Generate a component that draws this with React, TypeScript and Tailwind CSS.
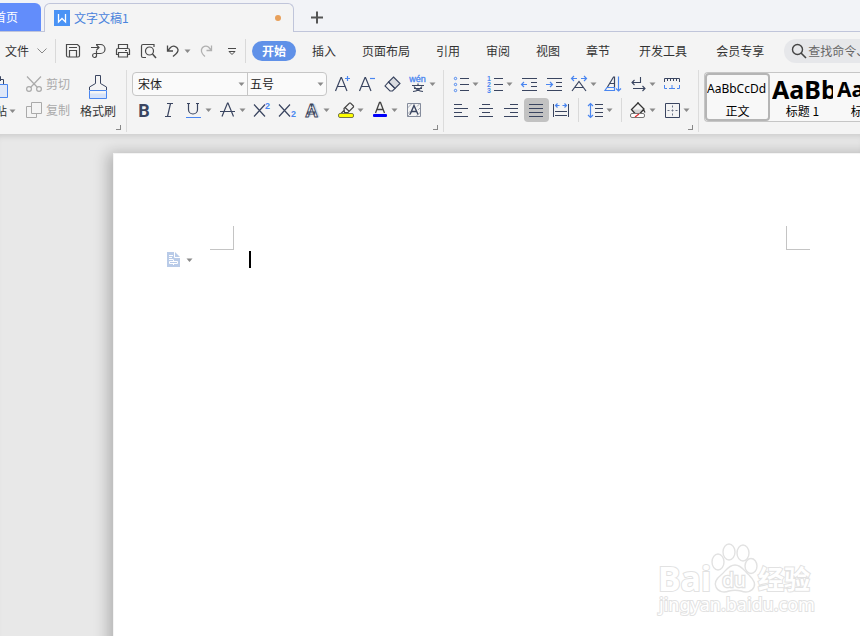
import type { ReactNode } from 'react'
import clsx from 'clsx'

const INK = '#3a4560'
const BLUE = '#4a86f0'
const GREY = '#4a4a4a'

function Icon({ children, color = INK }: { children: ReactNode; color?: string }) {
  return (
    <svg width="22" height="22" viewBox="0 0 22 22" fill="none" stroke={color} className="shrink-0" aria-hidden="true">
      {children}
    </svg>
  )
}

function Caret() {
  return (
    <svg width="7" height="4" viewBox="0 0 7 4" className="shrink-0" aria-hidden="true">
      <path d="M0.500 0.500h6L3.500 4z" fill="#8a8a8a" />
    </svg>
  )
}

interface ToolProps {
  label: string
  menu?: boolean
  active?: boolean
  children: ReactNode
}

function Tool({ label, menu, active, children }: ToolProps) {
  return (
    <button
      aria-label={label}
      title={label}
      className={clsx(
        'flex h-6 shrink-0 items-center rounded pl-px',
        menu ? 'w-[34px]' : 'w-[25px]',
        active ? 'bg-[#c2c2c2]' : 'hover:bg-[#e2e4ea]',
      )}
    >
      {children}
      {menu && <Caret />}
    </button>
  )
}

function Separator() {
  return <div className="mx-1 h-6 w-px shrink-0 bg-[#d9d9d9]" />
}

/* One ribbon section with its dialog launcher in the corner */
function Group({ children, className }: { children: ReactNode; className?: string }) {
  return (
    <section className={clsx('relative flex h-[62px] shrink-0 border-r border-[#dcdcdc] pt-0.5', className)}>
      {children}
      <button aria-label="更多设置" className="absolute right-[5px] bottom-0.5 size-[5px] border-r border-b border-[#888]" />
    </section>
  )
}

function TabBar() {
  return (
    <header className="flex h-8 items-end border-b border-[#c0c5da] bg-[#f2f3f7]">
      <a href="#home" className="flex h-7 w-[41px] shrink-0 items-center justify-end overflow-hidden rounded-tr-md bg-[#628dfb] pr-[23px] whitespace-nowrap text-white">
        首页
      </a>
      <div className="-mb-px ml-[3px] flex h-[29px] w-[250px] shrink-0 items-center rounded-t-md border border-b-0 border-[#c0c5da] bg-[#f4f4f4] pr-3 pl-[9px]">
        <svg width="16" height="16" viewBox="0 0 16 16" fill="none" className="shrink-0" aria-hidden="true">
          <rect width="16" height="16" fill="#4a93f5" />
          <path d="M4.500 4v8L8 8.500l3.500 3.500V4" stroke="#fff" strokeWidth="1.300" />
        </svg>
        <a href="#doc" className="ml-1 text-[#4a83dc]">文字文稿1</a>
        <span className="ml-auto size-1.5 rounded-full bg-[#e8a05a]" />
      </div>
      <button aria-label="新建" className="mb-[7px] ml-4">
        <svg width="13" height="13" viewBox="0 0 13 13" stroke="#555" strokeWidth="2" aria-hidden="true">
          <path d="M7 0.500v12M1 6.500h12" />
        </svg>
      </button>
    </header>
  )
}

const MENUS = ['插入', '页面布局', '引用', '审阅', '视图', '章节']
const EXTRA_MENUS = ['开发工具', '会员专享']

function MenuBar() {
  return (
    <div className="flex h-[38px] items-center pl-[5px] whitespace-nowrap text-[#333]">
      <button className="flex shrink-0 items-center gap-2">
        文件
        <svg width="10" height="6" viewBox="0 0 10 6" fill="none" stroke="#888" aria-hidden="true">
          <path d="M0.500 0.500L5 5l4.500-4.500" />
        </svg>
      </button>
      <div className="mr-[5px] ml-2 h-6 w-px shrink-0 bg-[#d9d9d9]" />
      <Tool label="保存">
        <Icon color={GREY}>
          <path d="M4.500 4.500h11l2 2v9a1.500 1.500 0 0 1-1.500 1.500H6a1.500 1.500 0 0 1-1.500-1.500z" strokeWidth="1.200" />
          <path d="M7 7.500h8M7.500 17v-6.500h7V17" strokeWidth="1.200" />
        </Icon>
      </Tool>
      <Tool label="输出为PDF">
        <Icon color={GREY}>
          <path d="M9 4.500h4.500a4.500 4.500 0 0 1 0 9H9M4 7.500h8M9.500 5l2.500 2.500L9.500 10M9.500 10.500v5.500a2 2 0 1 1-2-2.500h2" strokeWidth="1.200" />
        </Icon>
      </Tool>
      <Tool label="打印">
        <Icon color={GREY}>
          <path d="M6.500 8.500V4.500h9v4M6.500 14.500h-2v-4.500a1.500 1.500 0 0 1 1.500-1.500h10a1.500 1.500 0 0 1 1.500 1.500v4.500h-2" strokeWidth="1.200" />
          <path d="M6.500 12.500h9v4.500h-9zM13 10.500h2" strokeWidth="1.200" />
        </Icon>
      </Tool>
      <Tool label="打印预览">
        <Icon color={GREY}>
          <path d="M9 17.500H6A1.500 1.500 0 0 1 4.500 16V6A1.500 1.500 0 0 1 6 4.500h11V7" strokeWidth="1.200" />
          <circle cx="12.500" cy="11" r="4" strokeWidth="1.200" />
          <path d="M15.500 14l3.500 4" strokeWidth="1.500" />
        </Icon>
      </Tool>
      <Tool label="撤消" menu>
        <Icon color={GREY}>
          <path d="M5.500 5.500v5.500H11M5.500 11l3-3.500a4.500 4.500 0 0 1 7.500 2c.5 3-2 4.500-5 7" strokeWidth="1.300" />
        </Icon>
      </Tool>
      <Tool label="恢复">
        <Icon color="#b0b0b0">
          <path d="M15.500 5.500v5H10.500M15.500 10.500L12.500 7a4.500 4.500 0 0 0-7 2.500c-.5 2.500.5 4.500 3.500 7" strokeWidth="1.300" />
        </Icon>
      </Tool>
      <Tool label="自定义快速访问工具栏">
        <Icon color={GREY}>
          <path d="M7 8.500h8M8 11.500h6L11 14.500z" />
        </Icon>
      </Tool>
      <div className="h-6 w-px shrink-0 bg-[#d9d9d9]" />
      <nav className="flex min-w-0 flex-1 items-center">
        <button className="ml-1.5 h-5 w-11 shrink-0 rounded-full bg-[#6091e8] font-bold text-white">开始</button>
        <div className="ml-4 flex shrink-0 gap-[26px]">
          {MENUS.map((name) => (
            <button key={name}>{name}</button>
          ))}
        </div>
        <div className="ml-[29px] flex shrink-0 gap-[29px]">
          {EXTRA_MENUS.map((name) => (
            <button key={name}>{name}</button>
          ))}
        </div>
        <label className="ml-5 flex h-6 min-w-[76px] flex-1 items-center rounded-l-full bg-[#e6e7ea] pl-1">
          <Icon color="#444">
            <circle cx="9.500" cy="9.500" r="5" strokeWidth="1.400" />
            <path d="M13 13l5 5" strokeWidth="1.600" />
          </Icon>
          <input
            aria-label="查找命令"
            placeholder="查找命令、搜索模板"
            className="-ml-0.5 w-full min-w-0 bg-transparent outline-none placeholder:text-[#666]"
          />
        </label>
      </nav>
    </div>
  )
}

function ClipboardGroup() {
  return (
    <Group className="w-[127px] overflow-hidden">
      <button className="-ml-[18px] flex w-[34px] shrink-0 flex-col items-end text-[#333]">
        <svg width="24" height="24" viewBox="0 0 24 24" fill="none" className="mt-1 mr-[7px]" aria-hidden="true">
          <path d="M2.500 21V3.500h16V9M7.500 5V0.500h8V5" stroke={INK} />
          <path d="M9.500 8.500h13v13h-13z" fill="#e0e8f8" stroke={BLUE} />
        </svg>
        <span className="mt-[3px] flex items-center gap-0.5 whitespace-nowrap">粘贴<Caret /></span>
      </button>
      <div className="ml-[7px] flex shrink-0 flex-col gap-0.5 text-[#aaa]">
        <button className="flex h-6 items-center gap-px whitespace-nowrap">
          <Icon color="#aaa">
            <path d="M4 3.500l10.500 11M18 3.500L7.500 14.500" strokeWidth="1.200" />
            <circle cx="6" cy="16" r="2.400" strokeWidth="1.200" />
            <circle cx="16" cy="16" r="2.400" strokeWidth="1.200" />
          </Icon>
          剪切
        </button>
        <button className="flex h-6 items-center gap-px whitespace-nowrap">
          <Icon color="#aaa">
            <path d="M8.500 3.500h10v11h-10zM8 7.500H3.500v11h10V15" />
          </Icon>
          复制
        </button>
      </div>
      <button className="ml-2.5 flex w-9 shrink-0 flex-col items-center whitespace-nowrap text-[#333]">
        <svg width="20" height="26" viewBox="0 0 20 26" fill="none" className="mt-0.5" aria-hidden="true">
          <path d="M1.500 19.500h17v5h-17z" fill="#d5e2fa" />
          <path d="M1.500 16v-3l6-3.500v-8h5v8l6 3.500v3" stroke={INK} />
          <path d="M1.500 16.500h17v8h-17z" stroke={BLUE} />
        </svg>
        <span className="mt-[3px]">格式刷</span>
      </button>
    </Group>
  )
}

function FontGroup() {
  return (
    <Group className="w-[317px] pl-[5px]">
      <div className="flex flex-col gap-0.5">
        <div className="flex items-center">
          <div className="mr-1 flex h-6 w-[195px] items-center rounded border border-[#c6c6c6] bg-[#fafafa]">
            <span className="relative flex h-full w-[115px] items-center border-r border-[#c6c6c6]">
              <select aria-label="字体" className="h-full w-full appearance-none bg-transparent pl-[5px] outline-none">
                <option>宋体</option>
              </select>
              <span className="pointer-events-none absolute right-0.5"><Caret /></span>
            </span>
            <span className="relative flex h-full flex-1 items-center">
              <select aria-label="字号" className="h-full w-full appearance-none bg-transparent pl-0.5 outline-none">
                <option>五号</option>
              </select>
              <span className="pointer-events-none absolute right-0.5"><Caret /></span>
            </span>
          </div>
          <Tool label="增大字号">
            <Icon>
              <path d="M3.500 18L9 4.500h.5L15 18M5.500 13.500H13" strokeWidth="1.200" />
              <path d="M13 5.500h5M15.500 3v5" stroke={BLUE} strokeWidth="1.200" />
            </Icon>
          </Tool>
          <Tool label="减小字号">
            <Icon>
              <path d="M2.500 18L8 4.500h.5L14 18M4.500 13.500H12" strokeWidth="1.200" />
              <path d="M13 5.500h5" stroke={BLUE} strokeWidth="1.200" />
            </Icon>
          </Tool>
          <Tool label="清除格式">
            <Icon>
              <path d="M11.500 4L18 10.500 13 15.500 6.500 9z" fill="#d9dbe0" strokeWidth="1.100" />
              <path d="M6.500 9L13 15.500 10.500 18H8L3 13z" strokeWidth="1.100" />
            </Icon>
          </Tool>
          <Tool label="拼音指南" menu>
            <Icon>
              <text x="10.500" y="9" fontSize="9" textAnchor="middle" fill={BLUE} stroke={BLUE} strokeWidth="0.300" fontFamily="Liberation Sans, sans-serif">wén</text>
              <path d="M5 12.500h12M11 10.500v2M7 13.500c2 3 4.500 4.500 9 5M15 13.500c-2 3-4.500 4.500-9 5M7 15.500h8" strokeWidth="1.200" />
            </Icon>
          </Tool>
        </div>
        <div className="flex items-center">
          <Tool label="加粗">
            <Icon>
              <text x="11" y="17.500" fontSize="18" fontWeight="700" textAnchor="middle" fill={INK} stroke="none" fontFamily="Roboto, sans-serif">B</text>
            </Icon>
          </Tool>
          <Tool label="倾斜">
            <Icon>
              <path d="M9 4.500h6M7 17.500h6M12.500 4.500L9.500 17.500" strokeWidth="1.200" />
            </Icon>
          </Tool>
          <Tool label="下划线" menu>
            <Icon>
              <path d="M4 4.500h3M13 4.500h3M5.500 4.500v6a4.500 4.500 0 0 0 9 0v-6" strokeWidth="1.200" />
              <path d="M3 18.500h15" stroke={BLUE} />
            </Icon>
          </Tool>
          <Tool label="删除线" menu>
            <Icon>
              <path d="M5 17.500L10.500 4h.5L16.500 17.500M3 12.500h15" strokeWidth="1.200" />
            </Icon>
          </Tool>
          <Tool label="上标">
            <Icon>
              <path d="M3 5.500l11 12M14 5.500L3 17.500" strokeWidth="1.200" />
              <text x="14" y="10" fontSize="9" fontWeight="700" fill={BLUE} stroke="none" fontFamily="Liberation Sans, sans-serif">2</text>
            </Icon>
          </Tool>
          <Tool label="下标">
            <Icon>
              <path d="M3 5.500l11 12M14 5.500L3 17.500" strokeWidth="1.200" />
              <text x="15" y="18" fontSize="9" fontWeight="700" fill={BLUE} stroke="none" fontFamily="Liberation Sans, sans-serif">2</text>
            </Icon>
          </Tool>
          <Tool label="文字效果" menu>
            <Icon>
              <text x="12.500" y="17.500" fontSize="18" fontWeight="700" textAnchor="middle" fill="#d8dbe2" stroke="none" fontFamily="Roboto, sans-serif">A</text>
              <text x="10.500" y="17.500" fontSize="18" fontWeight="700" textAnchor="middle" fill="#f4f4f4" strokeWidth="0.900" fontFamily="Roboto, sans-serif">A</text>
            </Icon>
          </Tool>
          <Tool label="突出显示" menu>
            <Icon color="#444">
              <path d="M9 9.500L14.500 4h1l3 3v1l-5.500 5.500H9.500zM10 8.500l4.500 4M9 11.500l-3 3h5" strokeWidth="1.200" />
              <rect x="3.500" y="14.500" width="15" height="4" rx="1.500" fill="#ffff00" stroke="#77774a" />
            </Icon>
          </Tool>
          <Tool label="字体颜色" menu>
            <Icon color="#444">
              <path d="M6.500 14L10.500 3.500h1L15.500 14M8 10.500h6" strokeWidth="1.300" />
              <rect x="4" y="15" width="14" height="3" rx="1" fill="#0000fa" stroke="none" />
            </Icon>
          </Tool>
          <Tool label="字符底纹">
            <Icon>
              <path d="M4.500 9l4.500-4.500M4.500 15l3-3M13 17.500l4.500-4.500M4.500 17.500l4-4M14 7.500l3-3M15 11l2.500-2.500" stroke="#a5abb8" />
              <path d="M4.500 4.500h13v13h-13z" stroke="#858c9c" />
              <path d="M7 15.500L11 6.500l4 9M8.500 12.500h5" strokeWidth="1.400" />
            </Icon>
          </Tool>
        </div>
      </div>
    </Group>
  )
}

function ParagraphGroup() {
  return (
    <Group className="w-[255px] pl-[5px]">
      <div className="flex flex-col gap-0.5">
        <div className="flex">
          <Tool label="项目符号" menu>
            <Icon>
              <path d="M10 5.500h9M10 11.500h9M10 17.500h9" />
              <g stroke={BLUE}>
                <circle cx="5.500" cy="5.500" r="1.200" />
                <circle cx="5.500" cy="11.500" r="1.200" />
                <circle cx="5.500" cy="17.500" r="1.200" />
              </g>
            </Icon>
          </Tool>
          <Tool label="编号" menu>
            <Icon>
              <path d="M10 5.500h9M10 11.500h9M10 17.500h9" />
              <g fill={BLUE} stroke="none" fontSize="7" fontWeight="700" fontFamily="Liberation Sans, sans-serif">
                <text x="3" y="7.500">1</text>
                <text x="3" y="13.500">2</text>
                <text x="3" y="19.500">3</text>
              </g>
            </Icon>
          </Tool>
          <Tool label="减少缩进量">
            <Icon>
              <path d="M4 5.500h15M13 9.500h6M13 13.500h6M4 17.500h15" />
              <path d="M9 11.500H3.500M6 9l-2.500 2.500L6 14" stroke={BLUE} strokeWidth="1.200" />
            </Icon>
          </Tool>
          <Tool label="增加缩进量">
            <Icon>
              <path d="M4 5.500h15M13 9.500h6M13 13.500h6M4 17.500h15" />
              <path d="M3 11.500h6.500M7 9l2.500 2.500L7 14" stroke={BLUE} strokeWidth="1.200" />
            </Icon>
          </Tool>
          <Tool label="中文版式" menu>
            <Icon>
              <path d="M4 18L11 8.500l7 9.500M6.500 14.500h9" strokeWidth="1.200" />
              <path d="M9 5.500H3.500M6 3L3.500 5.500 6 8M13 5.500h5.500M16 3l2.500 2.500L16 8" stroke={BLUE} strokeWidth="1.200" />
            </Icon>
          </Tool>
          <Tool label="排序">
            <Icon>
              <path d="M5.500 14L11.500 4h1v10.500M8 10.500h4.500" strokeWidth="1.200" />
              <path d="M5 14.500h7.500v3H3zM16.500 3.500v14.500M14 15.500l2.500 2.500 2.500-2.500" stroke={BLUE} strokeWidth="1.200" />
            </Icon>
          </Tool>
          <Tool label="显示/隐藏编辑标记" menu>
            <Icon>
              <path d="M13.500 4v5.500H5M7.500 7L5 9.500 7.500 12M6 15.500h12M15.500 13l2.500 2.500-2.500 2.500" strokeWidth="1.100" />
            </Icon>
          </Tool>
          <Tool label="制表位">
            <Icon>
              <path d="M3.500 9V5.500h15V9M6.500 5.500V8M9.500 5.500V8M12.500 5.500V8M15.500 5.500V8" />
              <path d="M3.500 12v3.500H6M8 15.500h6M11 12v3.500M16 15.500h2.500V12" stroke={BLUE} />
            </Icon>
          </Tool>
        </div>
        <div className="flex items-center">
          <Tool label="左对齐">
            <Icon><path d="M4 5.500h8M4 9.500h14M4 13.500h8M4 17.500h14" /></Icon>
          </Tool>
          <Tool label="居中对齐">
            <Icon><path d="M7 5.500h8M4 9.500h14M7 13.500h8M4 17.500h14" /></Icon>
          </Tool>
          <Tool label="右对齐">
            <Icon><path d="M10 5.500h8M4 9.500h14M10 13.500h8M4 17.500h14" /></Icon>
          </Tool>
          <Tool label="两端对齐" active>
            <Icon><path d="M4 5.500h14M4 9.500h14M4 13.500h14M4 17.500h14" /></Icon>
          </Tool>
          <Tool label="分散对齐">
            <Icon>
              <path d="M3.500 5v13M18.500 5v13M5 12.500h12M5 16.500h12" />
              <path d="M9.500 6.500H5.500M7.500 4.500l-2 2 2 2M12.500 6.500h4M14.500 4.500l2 2-2 2" stroke={BLUE} strokeWidth="1.200" />
            </Icon>
          </Tool>
          <Separator />
          <Tool label="行距" menu>
            <Icon>
              <path d="M11 5.500h8M11 9.500h8M11 13.500h8M11 17.500h8" />
              <path d="M6.500 4.500v14M4 7l2.500-2.500L9 7M4 16l2.500 2.500L9 16" stroke={BLUE} strokeWidth="1.200" />
            </Icon>
          </Tool>
          <Separator />
          <Tool label="底纹颜色" menu>
            <Icon color="#333">
              <path d="M5.500 10.500h11L12 15H9z" fill="#d5d5d5" stroke="none" />
              <path d="M11 4l6 6-4 4.500M11 4l-6.500 6.500L8 14.500M11 4V3M16.500 10.500l1.500 3" strokeWidth="1.300" />
              <rect x="3.500" y="14.500" width="14" height="4" rx="1.500" fill="#fff" stroke="#777" />
              <path d="M8 18l4-3" stroke="#e03030" strokeWidth="1.300" />
            </Icon>
          </Tool>
          <Tool label="边框" menu>
            <Icon>
              <path d="M4.500 4.500h14v14h-14z" />
              <path d="M11.500 6.500v10M6.500 11.500h10" strokeDasharray="2 2" stroke="#6a7286" />
            </Icon>
          </Tool>
        </div>
      </div>
    </Group>
  )
}

const STYLES = [
  { label: '正文', sample: 'AaBbCcDd', size: 'text-[12px]' },
  { label: '标题 1', sample: 'AaBb', size: 'text-[25px] font-bold' },
  { label: '标题 2', sample: 'AaBb', size: 'text-[21px] font-bold' },
]

function StyleGallery() {
  return (
    <div className="min-w-0 flex-1 overflow-hidden pt-0.5 pl-[5px]">
      <div className="flex h-[50px] rounded-l border border-r-0 border-[#c6c6c6] bg-[#f8f8f8] text-black">
        {STYLES.map((style, i) => (
          <button
            key={style.label}
            className={clsx(
              'flex w-[65px] shrink-0 flex-col items-center overflow-hidden rounded-sm border-2 whitespace-nowrap',
              i === 0 ? 'border-[#b5b5b5]' : 'border-transparent',
            )}
          >
            <span className={clsx('flex h-7 w-full items-center font-["Noto_Sans",sans-serif]', style.size)}>
              {style.sample}
            </span>
            <span className="leading-4">{style.label}</span>
          </button>
        ))}
      </div>
    </div>
  )
}

function Watermark() {
  return (
    <svg
      width="160"
      height="80"
      viewBox="0 0 160 80"
      fill="#fff"
      stroke="#e2e2e2"
      className="absolute right-[44px] bottom-[16px]"
      fontFamily="Noto Sans, Noto Sans CJK SC, sans-serif"
      aria-label="Baidu 经验"
    >
      <g strokeWidth="2" paintOrder="stroke" fontWeight="700">
        <text x="2" y="51" fontSize="34">Bai</text>
        <text x="102" y="49" fontSize="26" fontFamily="Noto Sans CJK SC, sans-serif">经验</text>
        <text x="3" y="71" fontSize="18" fontWeight="400">jingyan.baidu.com</text>
      </g>
      <g strokeWidth="1.400">
        <ellipse cx="62" cy="22" rx="6" ry="8" />
        <ellipse cx="73" cy="12" rx="6" ry="8" />
        <ellipse cx="87" cy="13" rx="6" ry="8" />
        <ellipse cx="95" cy="26" rx="6" ry="7.500" />
        <path d="M79 25c-7 0-9 6-14 10-5 4-7 8-5 12 2 5 8 6 13 4 4-1 8-1 12 0 5 2 11 1 13-4 2-4-1-8-5-12-5-4-7-10-14-10z" />
      </g>
      <text x="78" y="47" fontSize="19" textAnchor="middle" strokeWidth="2.500" paintOrder="stroke">du</text>
    </svg>
  )
}

function DocumentArea() {
  return (
    <main className="relative min-h-0 flex-1 overflow-hidden bg-[#e8e8e8] pt-[18px] pl-[113px] shadow-[inset_0_5px_5px_-3px_#d0d0d0]">
      <article className="h-[1123px] w-[794px] border border-[#f4f4f4] bg-white pt-[72px] shadow-[-3px_2px_14px_2px_rgba(0,0,0,0.24)]">
        {/* Margin crop marks */}
        <div className="flex justify-between px-24">
          <span className="size-6 border-r border-b border-[#c4c4c4]" />
          <span className="size-6 border-b border-l border-[#c4c4c4]" />
        </div>
        <div className="flex items-center pt-px pl-[53px]">
          <button aria-label="段落布局" className="flex items-center gap-1.5">
            <svg width="13" height="15" viewBox="0 0 13 15" fill="none" aria-hidden="true">
              <path d="M0 0h8l5 5v10H0z" fill="#b9cbe8" />
              <path d="M7.500 0v5.500H13M2 3.500h4M2 5.500h3M2 7.500h4M2.500 9.500h8v2h-8zM6.500 7.500v2M6.500 11.500V13" stroke="#fff" />
            </svg>
            <Caret />
          </button>
          <span className="ml-14 h-[17px] w-0.5 bg-black" />
        </div>
      </article>
      <Watermark />
    </main>
  )
}

export default function App() {
  return (
    <div className='flex h-screen flex-col overflow-hidden bg-[#f4f4f4] font-["Noto_Sans_CJK_SC",sans-serif] text-[12px] leading-4 text-[#222]'>
      <TabBar />
      <MenuBar />
      <div className="flex h-[65px] shrink-0 border-b border-[#d4d4d4]">
        <ClipboardGroup />
        <FontGroup />
        <ParagraphGroup />
        <StyleGallery />
      </div>
      <DocumentArea />
    </div>
  )
}
